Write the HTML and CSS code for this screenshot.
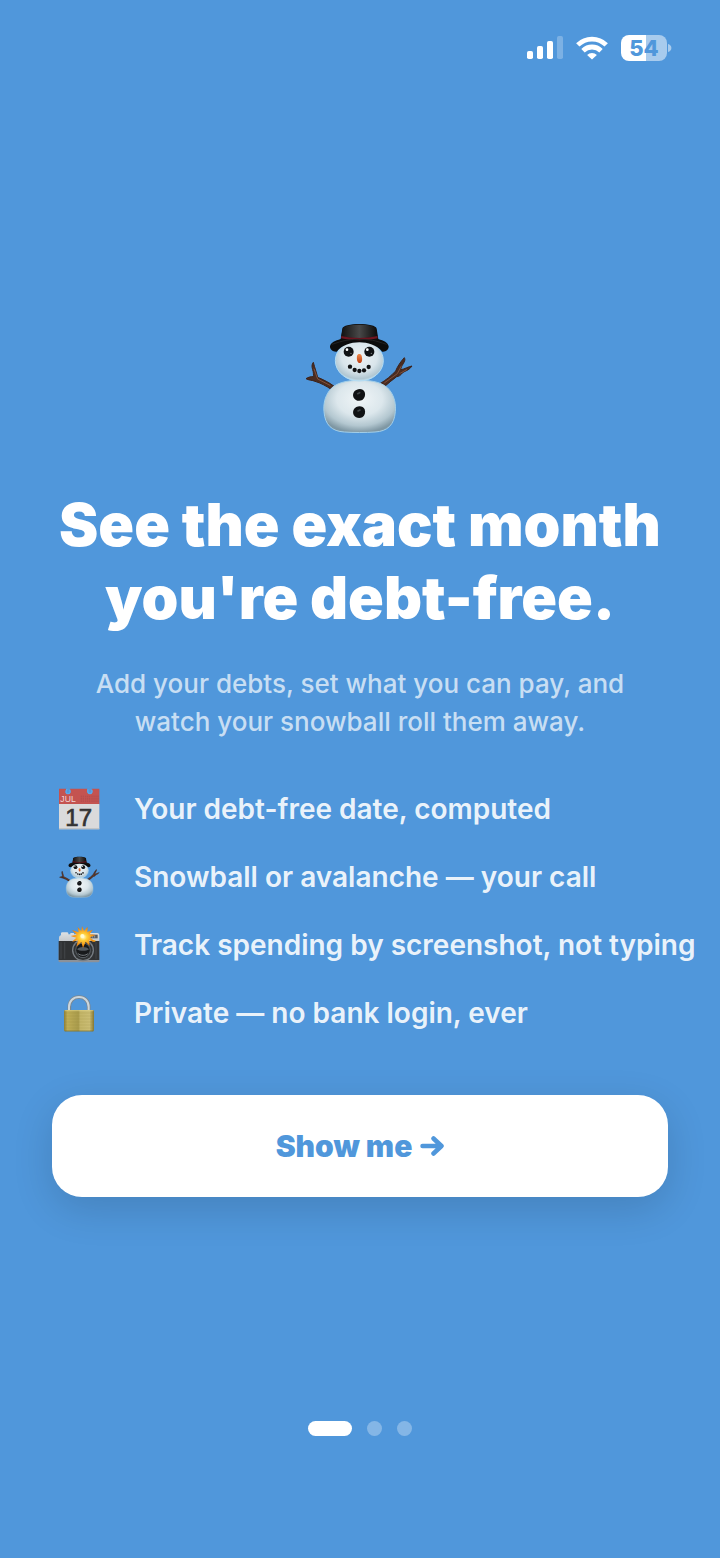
FILE: index.html
```html
<!DOCTYPE html>
<html lang="en">
  <head>
    <meta charset="UTF-8" />
    <meta name="viewport" content="width=device-width, initial-scale=1.0" />
    <title>Debt-free date</title>
    <link rel="stylesheet" href="styles.css">
  </head>
  <body>
    <header class="status-bar">
      <svg class="signal" viewBox="0 0 36 24" fill="#fff" aria-hidden="true">
        <rect x="0" y="15" width="6" height="8" rx="1.8" />
        <rect x="10" y="10" width="6" height="13" rx="1.8" />
        <rect x="20" y="5" width="6" height="18" rx="1.8" />
        <rect x="30" y="0" width="6" height="23" rx="1.8" opacity="0.25" />
      </svg>
      <svg class="wifi" viewBox="0 0 32 24" fill="none" stroke="#fff" stroke-width="4.8" aria-hidden="true">
        <path d="M1.8 8.900a20.200 20.200 0 0 1 28.400 0" />
        <path d="M7 14.700a12.800 12.800 0 0 1 18 0" />
        <path d="M16 23.600l-4.900-4.600a7 7 0 0 1 9.800 0z" fill="#fff" stroke="none" />
      </svg>
      <div class="battery">
        <span class="battery-level">54</span>
        <svg class="battery-cap" viewBox="0 0 4 8" fill="#fff" aria-hidden="true">
          <path d="M0 0c2 .6 3.400 2 3.400 4S2 7.400 0 8z" opacity="0.5" />
        </svg>
      </div>
    </header>

    <main>
      <svg class="hero" viewBox="48 36 324 336" role="img" aria-label="Snowman">
        <defs>
          <radialGradient id="snow-head" cx="0.5" cy="0.4" r="0.62">
            <stop offset="0" stop-color="#eef3f5" />
            <stop offset="0.6" stop-color="#d9e5eb" />
            <stop offset="0.88" stop-color="#b1c7d2" />
            <stop offset="1" stop-color="#c9e8f6" />
          </radialGradient>
          <radialGradient id="snow-body" cx="0.5" cy="0.36" r="0.64">
            <stop offset="0" stop-color="#f0f5f7" />
            <stop offset="0.5" stop-color="#dce7ec" />
            <stop offset="0.8" stop-color="#b3c7d0" />
            <stop offset="1" stop-color="#7f97a3" />
          </radialGradient>
          <linearGradient id="hat">
            <stop offset="0" stop-color="#111" />
            <stop offset="0.5" stop-color="#484848" />
            <stop offset="1" stop-color="#0a0a0a" />
          </linearGradient>
          <linearGradient id="nose" x2="0" y2="1">
            <stop offset="0" stop-color="#ee8a4c" />
            <stop offset="1" stop-color="#bd3d12" />
          </linearGradient>
        </defs>
        <g id="snowman">
          <path d="M134 230c-17-13-34-21-51-28-3-13-9-29-13-45-5 7-5 12-2 22 3 9 2 16 3 21-8-1-17 2-23 6 8 5 18 4 27 8 17 5 34 14 50 25zM270 221c18-11 34-24 47-38 5-13 14-27 26-40 4 7 0 13-7 24-3 7-4 9-3 12 11-2 22-9 33-11-7 11-17 14-27 19-7 9-13 13-19 13-13 10-26 20-38 31z" fill="#4a2c21" stroke="#3c221a" stroke-width="3" stroke-linejoin="round" />
          <g fill="none" stroke="#81503a" stroke-width="3" stroke-linecap="round">
            <path d="M120 226l-37-19-11-30M284 218l38-27 12-23M330 190l20-11" />
          </g>
          <path d="M210 211c40 0 72 7 90 31 14 19 18 41 16 63-3 40-24 59-61 61-30 2-62 2-92 0-37-2-58-21-61-61-2-22 2-44 16-63 18-24 52-31 92-31z" fill="url(#snow-body)" stroke="#a4d0ea" stroke-width="3" />
          <ellipse cx="208" cy="152" rx="72" ry="61" fill="url(#snow-head)" stroke="#b4ddf4" stroke-width="3" />
          <path d="M120 109c2-12 16-17 32-22l5-31c1-9 25-14 51-14s51 5 52 14l5 31c16 5 29 10 31 22 1 9-8 17-19 16-18-20-43-28-69-28s-51 8-68 28c-11 1-21-7-20-16z" fill="#0c0c0c" />
          <path d="M154 78l4-22c2-8 25-12 50-12s48 4 50 12l4 22c-30 9-78 9-108 0z" fill="url(#hat)" />
          <path d="M154 78c30 8 78 8 108 0l1 7c-32 8-78 8-110 0z" fill="#6e1420" />
          <path d="M126 103c17-5 30-10 42-12 26-4 54-4 80 0 12 2 25 7 42 12" fill="none" stroke="#222" stroke-width="3" />
          <g fill="#101214">
            <circle cx="176" cy="125" r="15" />
            <circle cx="238" cy="125" r="15" />
            <circle cx="180" cy="170" r="6.500" />
            <circle cx="194" cy="180" r="6.500" />
            <circle cx="208" cy="183" r="6.500" />
            <circle cx="222" cy="181" r="6.500" />
            <circle cx="236" cy="171" r="6.500" />
            <path d="M199 240c10-6 21-3 25 6 3 8 1 18-7 24-10 5-21 2-26-7-4-9-1-19 8-23z" />
            <path d="M199 291c10-5 21-2 25 7 3 9 1 19-7 24-10 5-21 1-26-7-4-9-1-19 8-24z" />
          </g>
          <g fill="#fff">
            <circle cx="171" cy="119" r="4" />
            <circle cx="232" cy="119" r="4" />
            <circle cx="183" cy="130" r="2" opacity="0.5" />
            <circle cx="244" cy="130" r="2" opacity="0.5" />
          </g>
          <path d="M203 251l6-3M204 303l6-3" stroke="#404548" stroke-width="5" stroke-linecap="round" />
          <path d="M201 138c2-8 12-8 14 0 2 8 3 17-4 21-8 2-12-9-10-21z" fill="url(#nose)" />
        </g>
      </svg>

      <h1>See the exact month you're debt-free.</h1>
      <p class="subtitle">Add your debts, set what you can pay, and watch your snowball roll them away.</p>

      <ul class="features">
        <li>
          <svg class="feature-icon" viewBox="0 0 126 126" aria-hidden="true">
            <path d="M3 2h22c-5 10-2 16 5 16s10-6 5-16h53c-3 10 1 16 8 16 6 0 9-6 5-16h23v48H3z" fill="#c45350" />
            <path d="M3 48h121v76H3z" fill="#dadadb" />
            <path d="M3 121h121v3H3z" fill="#b8bcc1" />
            <path d="M27 3c-5 9-3 14 3 14s8-5 5-12M90 4c-2 8 1 13 6 13s8-5 5-12" fill="none" stroke="#5da8e9" stroke-width="4" />
            <path d="M70 23v20M76 23v20M83 23v20M89 23v20M95 23v20M102 23v20M108 23v20M114 23v20M120 23v20" stroke="#a94a4c" stroke-width="2" stroke-dasharray="5 2" />
            <text class="cal-month" x="7" y="41">JUL</text>
            <text class="cal-day" x="62" y="113" text-anchor="middle">17</text>
          </svg>
          <span>Your debt-free date, computed</span>
        </li>
        <li>
          <svg class="feature-icon" viewBox="36 36 336 336" aria-hidden="true">
            <use href="#snowman" />
          </svg>
          <span>Snowball or avalanche — your call</span>
        </li>
        <li>
          <svg class="feature-icon" viewBox="0 0 126 126" aria-hidden="true">
            <defs>
              <linearGradient id="silver" x2="0" y2="1">
                <stop offset="0" stop-color="#dce0e3" />
                <stop offset="1" stop-color="#8c9298" />
              </linearGradient>
              <radialGradient id="flash">
                <stop offset="0" stop-color="#fffde0" />
                <stop offset="0.3" stop-color="#ffd13c" />
                <stop offset="0.8" stop-color="#f18a10" />
                <stop offset="1" stop-color="#e8760c" />
              </radialGradient>
            </defs>
            <g transform="translate(0 6)">
              <path d="M3 36c0-5 3-7 6-8v-6q0-3 4-3h14q4 0 4 3v3h6v-4h11v4h40v-4h30q5 0 6 5v78q0 5-5 5H7q-5 0-5-5z" fill="url(#silver)" />
              <path d="M2 45h122v57H2z" fill="#303234" />
              <path d="M7 49h4v49H7zM18 49h4v49h-4zM112 49h4v49h-4z" fill="#3e4144" />
              <path d="M2 103h122v4H2z" fill="#8b9198" />
              <path d="M94 26h25v11H94z" fill="#555b61" />
              <path d="M98 28v7M104 28v7M110 28v7" stroke="#b9bec2" stroke-width="2" />
              <circle cx="75" cy="73" r="33" fill="#777d83" />
              <circle cx="75" cy="73" r="29" fill="#303335" />
              <circle cx="75" cy="73" r="22" fill="#181a1c" stroke="#5b6166" stroke-width="3" />
              <path d="M57 70c9-9 27-9 36 0-9 6-27 6-36 0z" fill="#555b60" />
              <path d="M59 82c9 8 24 8 32 0" fill="none" stroke="#777d82" stroke-width="3" />
              <path d="M103 42h9v5h-9z" fill="#f3b52d" />
              <path d="M72 0l6 15 11-13-1 16 16-7-9 14 18 2-17 7 16 14-19-5 2 17-12-13-8 19-5-18-15 14 5-19-18 4 13-12-17-5 18-4-14-14 20 7-3-16 11 12z" fill="url(#flash)" />
              <circle cx="73" cy="30" r="6" fill="#fffbd2" />
            </g>
          </svg>
          <span>Track spending by screenshot, not typing</span>
        </li>
        <li>
          <svg class="feature-icon" viewBox="0 0 126 126" aria-hidden="true">
            <defs>
              <linearGradient id="brass">
                <stop offset="0" stop-color="#8e7f38" />
                <stop offset="0.12" stop-color="#bfae58" />
                <stop offset="0.48" stop-color="#a99b4c" />
                <stop offset="0.54" stop-color="#c3b569" />
                <stop offset="0.85" stop-color="#cbbd74" />
                <stop offset="1" stop-color="#857734" />
              </linearGradient>
            </defs>
            <path d="M34 64V45c0-18 12-30 29-30s29 12 29 30v19" fill="none" stroke="#7b8790" stroke-width="11" />
            <path d="M33 64V45c0-18 13-30 30-30s29 12 29 30v19" fill="none" stroke="#cbd6dd" stroke-width="6" />
            <rect x="18" y="54" width="90" height="64" rx="4" fill="url(#brass)" />
            <path d="M19 63h88M19 72h88M19 81h88M19 90h88M19 99h88M19 108h88" stroke="#8c8131" stroke-width="1.500" opacity="0.35" />
            <path d="M20 56h86" stroke="#e0d48b" stroke-width="2" />
            <path d="M20 117h86" stroke="#756822" stroke-width="2" />
          </svg>
          <span>Private — no bank login, ever</span>
        </li>
      </ul>

      <button type="button" class="cta">
        Show me
        <svg class="arrow" viewBox="0 0 24 20" fill="none" stroke="currentColor" stroke-width="4.500" stroke-linecap="round" stroke-linejoin="round" aria-hidden="true">
          <path d="M2.500 10h18M13.500 2.500L21.500 10l-8 7.500" />
        </svg>
      </button>
    </main>

    <footer class="pager">
      <span class="dot active"></span>
      <span class="dot"></span>
      <span class="dot"></span>
    </footer>
  </body>
</html>
```
FILE: styles.css
```css
* {
  margin: 0;
  padding: 0;
  box-sizing: border-box;
}

body {
  display: flex;
  flex-direction: column;
  min-height: 100vh;
  overflow-x: hidden;
  font-family: Inter, "Liberation Sans", sans-serif;
  background-color: #5097db;
  color: #fff;
}

/* Status bar */
.status-bar {
  display: flex;
  justify-content: flex-end;
  align-items: center;
  gap: 13px;
  padding: 35px 48px 37px;
}

.signal {
  width: 36px;
  height: 24px;
}

.wifi {
  width: 32px;
  height: 24px;
}

.battery {
  display: flex;
  align-items: center;
  gap: 1px;
}

.battery-level {
  width: 46px;
  height: 26px;
  border-radius: 8px;
  background: linear-gradient(90deg, #fff 54%, rgba(255, 255, 255, 0.5) 54%);
  color: #5097db;
  font-size: 22px;
  font-weight: 800;
  line-height: 26px;
  text-align: center;
}

.battery-cap {
  width: 4px;
  height: 8px;
}

/* Content */
main {
  flex: 1;
  display: flex;
  flex-direction: column;
  align-items: center;
  justify-content: center;
  padding: 0 52px;
}

.hero {
  width: 108px;
  height: 112px;
  margin-bottom: 54px;
}

h1 {
  font-size: 59px;
  font-weight: 900;
  line-height: 73px;
  text-align: center;
  margin-bottom: 31px;
}

.subtitle {
  max-width: 560px;
  font-size: 26px;
  font-weight: 500;
  line-height: 38px;
  text-align: center;
  color: rgba(255, 255, 255, 0.7);
  margin-bottom: 47px;
}

.features {
  align-self: stretch;
  display: flex;
  flex-direction: column;
  gap: 26px;
  list-style: none;
  margin-bottom: 61px;
}

.features li {
  display: flex;
  align-items: center;
  gap: 34px;
  height: 42px;
  padding-left: 6px;
  font-size: 28px;
  font-weight: 600;
  white-space: nowrap;
  color: rgba(255, 255, 255, 0.9);
}

.feature-icon {
  flex: none;
  width: 42px;
  height: 42px;
}

.cal-month,
.cal-day {
  font-family: "Liberation Sans", sans-serif;
  font-weight: 400;
}

.cal-month {
  font-size: 26px;
  fill: #f0d6d6;
}

.cal-day {
  font-size: 72px;
  fill: #333;
  stroke: #333;
  stroke-width: 2;
}

.cta {
  align-self: stretch;
  display: flex;
  align-items: center;
  justify-content: center;
  gap: 8px;
  height: 102px;
  border: none;
  border-radius: 30px;
  background-color: #fff;
  box-shadow: 0 12px 40px rgba(0, 0, 0, 0.14);
  color: #5097db;
  font-family: inherit;
  font-size: 30px;
  font-weight: 900;
  cursor: pointer;
}

.arrow {
  width: 24px;
  height: 20px;
}

/* Page dots */
.pager {
  display: flex;
  justify-content: center;
  gap: 15px;
  height: 137px;
}

.dot {
  width: 15px;
  height: 15px;
  border-radius: 8px;
  background-color: rgba(255, 255, 255, 0.3);
}

.dot.active {
  width: 44px;
  background-color: #fff;
}
```
